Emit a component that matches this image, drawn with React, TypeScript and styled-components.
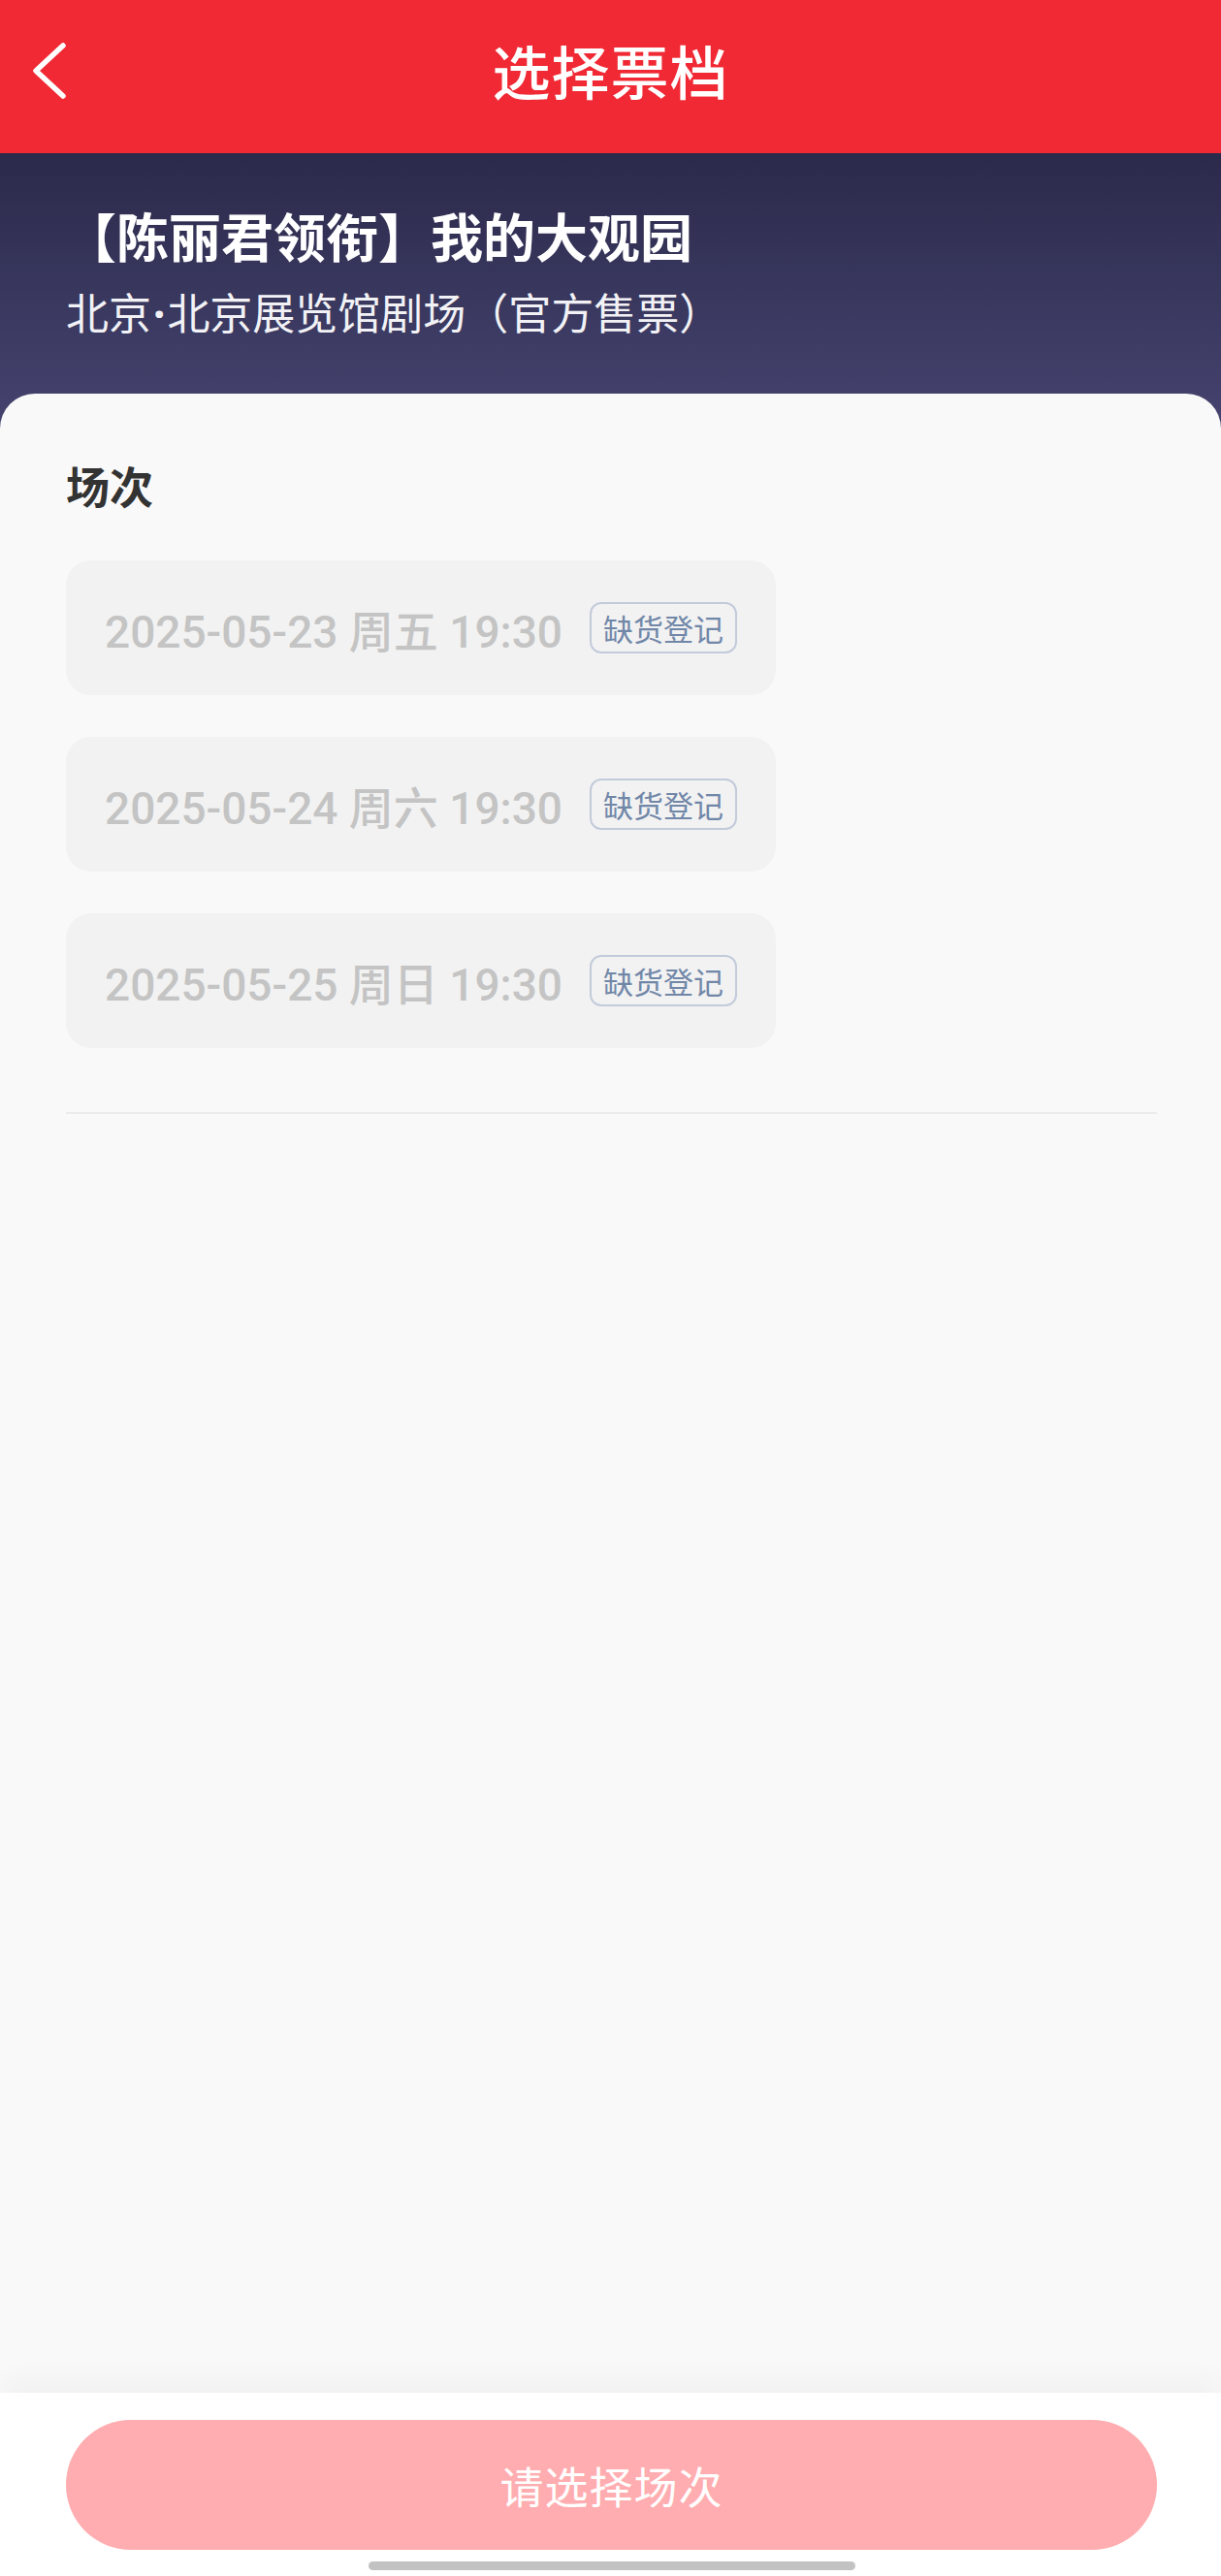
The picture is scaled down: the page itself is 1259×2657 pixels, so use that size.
import styled, { createGlobalStyle } from "styled-components";

const GlobalStyle = createGlobalStyle`
  * {
    box-sizing: border-box;
  }
  body {
    margin: 0;
    font-family: "Noto Sans CJK SC", "Noto Sans", sans-serif;
    background: #f9f9f9;
  }
`;

const sessions = [
  { date: "2025-05-23", week: "周五", time: "19:30" },
  { date: "2025-05-24", week: "周六", time: "19:30" },
  { date: "2025-05-25", week: "周日", time: "19:30" },
];

const App = () => {
  return (
    <>
      <GlobalStyle />
      <Page>
        <NavBar>
          <BackButton aria-label='back'>
            <svg width='44' height='60' viewBox='0 0 44 60'>
              <path
                d='M36 4 L8 30 L36 56'
                fill='none'
                stroke='white'
                strokeWidth='5.5'
                strokeLinecap='round'
                strokeLinejoin='round'
              />
            </svg>
          </BackButton>
          <NavTitle>选择票档</NavTitle>
          <span />
        </NavBar>

        <Hero>
          <ShowTitle>【陈丽君领衔】我的大观园</ShowTitle>
          <Venue>
            北京<MidDot>·</MidDot>北京展览馆剧场（官方售票）
          </Venue>
        </Hero>

        <Card>
          <SectionLabel>场次</SectionLabel>
          <SessionList>
            {sessions.map((s) => (
              <SessionItem key={s.date}>
                <SessionText>
                  {s.date} {s.week} {s.time}
                </SessionText>
                <Badge>缺货登记</Badge>
              </SessionItem>
            ))}
          </SessionList>
          <Divider />
        </Card>

        <Footer>
          <SubmitButton disabled>请选择场次</SubmitButton>
          <HomeIndicator />
        </Footer>
      </Page>
    </>
  );
};

export default App;

const Page = styled.div`
  width: 1259px;
  min-height: 2657px;
  display: flex;
  flex-direction: column;
  background: #f9f9f9;
`;

const NavBar = styled.div`
  height: 158px;
  background: #f02934;
  display: grid;
  grid-template-columns: 1fr auto 1fr;
  align-items: center;
`;

const BackButton = styled.div`
  align-self: start;
  padding-left: 29px;
  padding-top: 43px;
  display: flex;
`;

const NavTitle = styled.div`
  color: white;
  font-size: 60px;
  font-weight: 500;
  letter-spacing: 1px;
  line-height: 1;
  margin-top: -14px;
`;

const Hero = styled.div`
  background: linear-gradient(180deg, #2b2a4b 0%, #464470 100%);
  padding: 50px 68px 92px;
  display: flex;
  flex-direction: column;
  gap: 12px;
`;

const ShowTitle = styled.div`
  color: white;
  font-size: 54px;
  font-weight: 700;
  line-height: 70px;
  margin-left: -2px;
`;

const Venue = styled.div`
  color: #f2f2f6;
  font-size: 44px;
  font-weight: 400;
  line-height: 62px;
`;

const MidDot = styled.span`
  font-family: "Noto Sans", sans-serif;
  font-weight: 700;
  padding: 0 2px;
`;

const Card = styled.div`
  flex: 1;
  margin-top: -40px;
  background: #f9f9f9;
  border-radius: 36px 36px 0 0;
  padding: 64px 66px 0 68px;
`;

const SectionLabel = styled.div`
  font-size: 45px;
  font-weight: 700;
  color: #333333;
  line-height: 62px;
`;

const SessionList = styled.div`
  margin-top: 46px;
  display: flex;
  flex-direction: column;
  align-items: flex-start;
  gap: 43px;
`;

const SessionItem = styled.div`
  width: 732px;
  height: 139px;
  border-radius: 26px;
  background: #f2f2f2;
  display: flex;
  align-items: center;
  padding: 0 40px;
  justify-content: space-between;
`;

const SessionText = styled.span`
  font-family: "Roboto", "Noto Sans CJK SC", sans-serif;
  font-size: 46px;
  font-weight: 500;
  color: #c4c4c4;
  white-space: nowrap;
`;

const Badge = styled.span`
  height: 53px;
  padding: 0 12px;
  border: 2px solid #c3cbdb;
  border-radius: 12px;
  display: inline-flex;
  align-items: center;
  color: #7187a8;
  font-size: 31px;
  line-height: 1;
  white-space: nowrap;
`;

const Divider = styled.div`
  height: 2px;
  background: #ececec;
  margin-top: 66px;
`;

const Footer = styled.div`
  height: 189px;
  background: white;
  box-shadow: 0 -14px 28px rgba(0, 0, 0, 0.035);
  padding: 28px 66px 0 68px;
  display: flex;
  flex-direction: column;
  align-items: center;
`;

const SubmitButton = styled.button`
  width: 100%;
  height: 134px;
  border: none;
  border-radius: 67px;
  background: #ffadb0;
  color: white;
  font-family: "Noto Sans CJK SC", sans-serif;
  font-size: 45px;
  font-weight: 400;
  letter-spacing: 1px;
`;

const HomeIndicator = styled.div`
  width: 502px;
  height: 9px;
  border-radius: 5px;
  background: #c2c2c2;
  margin-top: 12px;
`;
